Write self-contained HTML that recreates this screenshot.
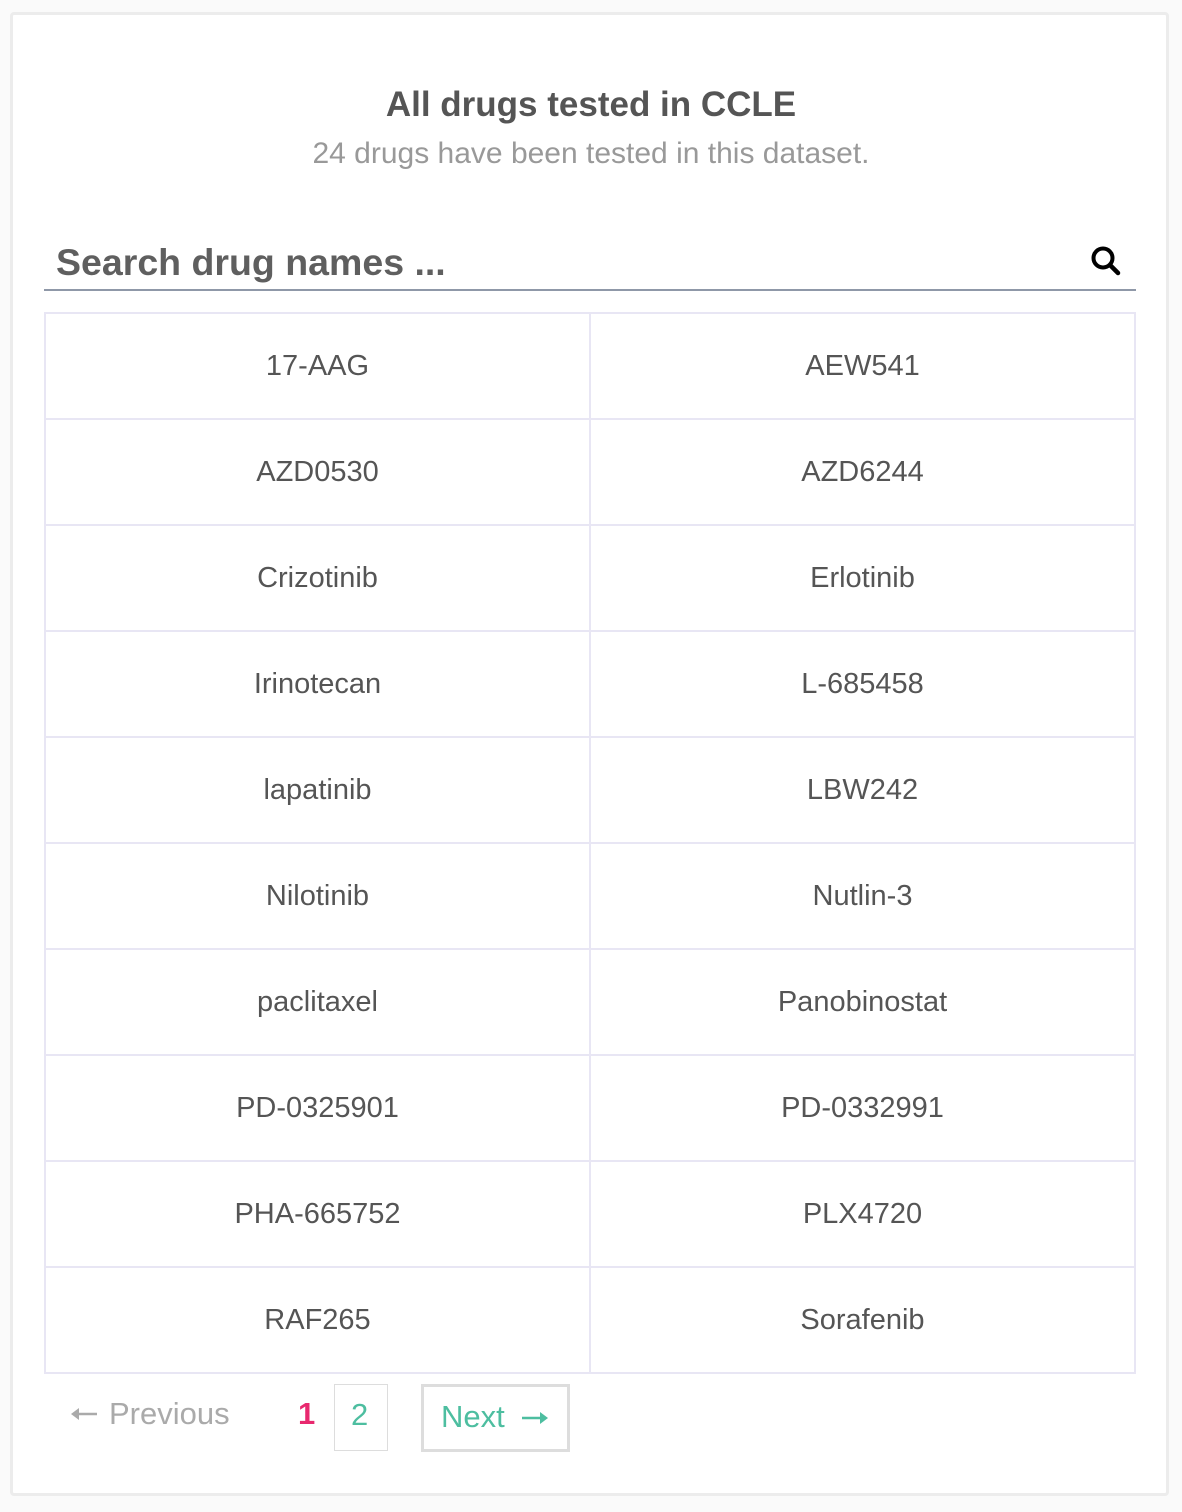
<!DOCTYPE html>
<html><head><meta charset="utf-8"><style>
html,body{margin:0;padding:0;background:#fafafa;width:1182px;height:1512px;overflow:hidden;font-family:"Liberation Sans",sans-serif;}
.card{position:absolute;left:10px;top:12px;width:1153px;height:1478px;background:#fff;border:3px solid #ececec;border-radius:4px;}
.title{position:absolute;left:0;right:0;top:85px;text-align:center;font-size:35px;font-weight:bold;color:#555;}
.sub{position:absolute;left:0;right:0;top:137px;text-align:center;font-size:30px;color:#999;}
.search{position:absolute;left:56px;top:241px;font-size:37.5px;font-weight:bold;color:#5f5f5f;}
.line{position:absolute;left:44px;top:289px;width:1092px;height:2px;background:#8f98a8;}
.icon{position:absolute;left:1089px;top:244px;}
table{position:absolute;left:44px;top:312px;border-collapse:collapse;width:1092px;}
td{border:2px solid #e8e6f4;height:104px;width:50%;text-align:center;font-size:29px;color:#555;padding:0;}
.pg{position:absolute;font-size:31px;}
</style></head><body>
<div class="card"></div>
<div class="title">All drugs tested in CCLE</div>
<div class="sub">24 drugs have been tested in this dataset.</div>
<div class="search">Search drug names ...</div>
<svg class="icon" width="34" height="34" viewBox="0 0 34 34"><circle cx="14" cy="14" r="9.5" fill="none" stroke="#000" stroke-width="4"/><line x1="21" y1="21" x2="29" y2="29" stroke="#000" stroke-width="4.5" stroke-linecap="round"/></svg>
<div class="line"></div>
<table>
<tr><td>17-AAG</td><td>AEW541</td></tr>
<tr><td>AZD0530</td><td>AZD6244</td></tr>
<tr><td>Crizotinib</td><td>Erlotinib</td></tr>
<tr><td>Irinotecan</td><td>L-685458</td></tr>
<tr><td>lapatinib</td><td>LBW242</td></tr>
<tr><td>Nilotinib</td><td>Nutlin-3</td></tr>
<tr><td>paclitaxel</td><td>Panobinostat</td></tr>
<tr><td>PD-0325901</td><td>PD-0332991</td></tr>
<tr><td>PHA-665752</td><td>PLX4720</td></tr>
<tr><td>RAF265</td><td>Sorafenib</td></tr>
</table>
<svg style="position:absolute;left:71px;top:1406px" width="26" height="16" viewBox="0 0 26 16"><line x1="5" y1="8" x2="26" y2="8" stroke="#aaa" stroke-width="2.5"/><path d="M0 8 L8 2 L8 14 Z" fill="#aaa"/></svg>
<div class="pg" style="left:109px;top:1396px;color:#aaa;">Previous</div>
<div class="pg" style="left:298px;top:1396px;color:#e8286e;font-weight:bold;">1</div>
<div style="position:absolute;left:334px;top:1384px;width:52px;height:65px;border:1px solid #ddd;"></div>
<div class="pg" style="left:351px;top:1397px;color:#4dbea0;">2</div>
<div style="position:absolute;left:421px;top:1384px;width:143px;height:62px;border:3px solid #ddd;"></div>
<div class="pg" style="left:441px;top:1399px;color:#4dbea0;">Next</div>
<svg style="position:absolute;left:522px;top:1410px" width="26" height="16" viewBox="0 0 26 16"><line x1="0" y1="8" x2="21" y2="8" stroke="#4dbea0" stroke-width="2.5"/><path d="M26 8 L18 2 L18 14 Z" fill="#4dbea0"/></svg>
</body></html>
